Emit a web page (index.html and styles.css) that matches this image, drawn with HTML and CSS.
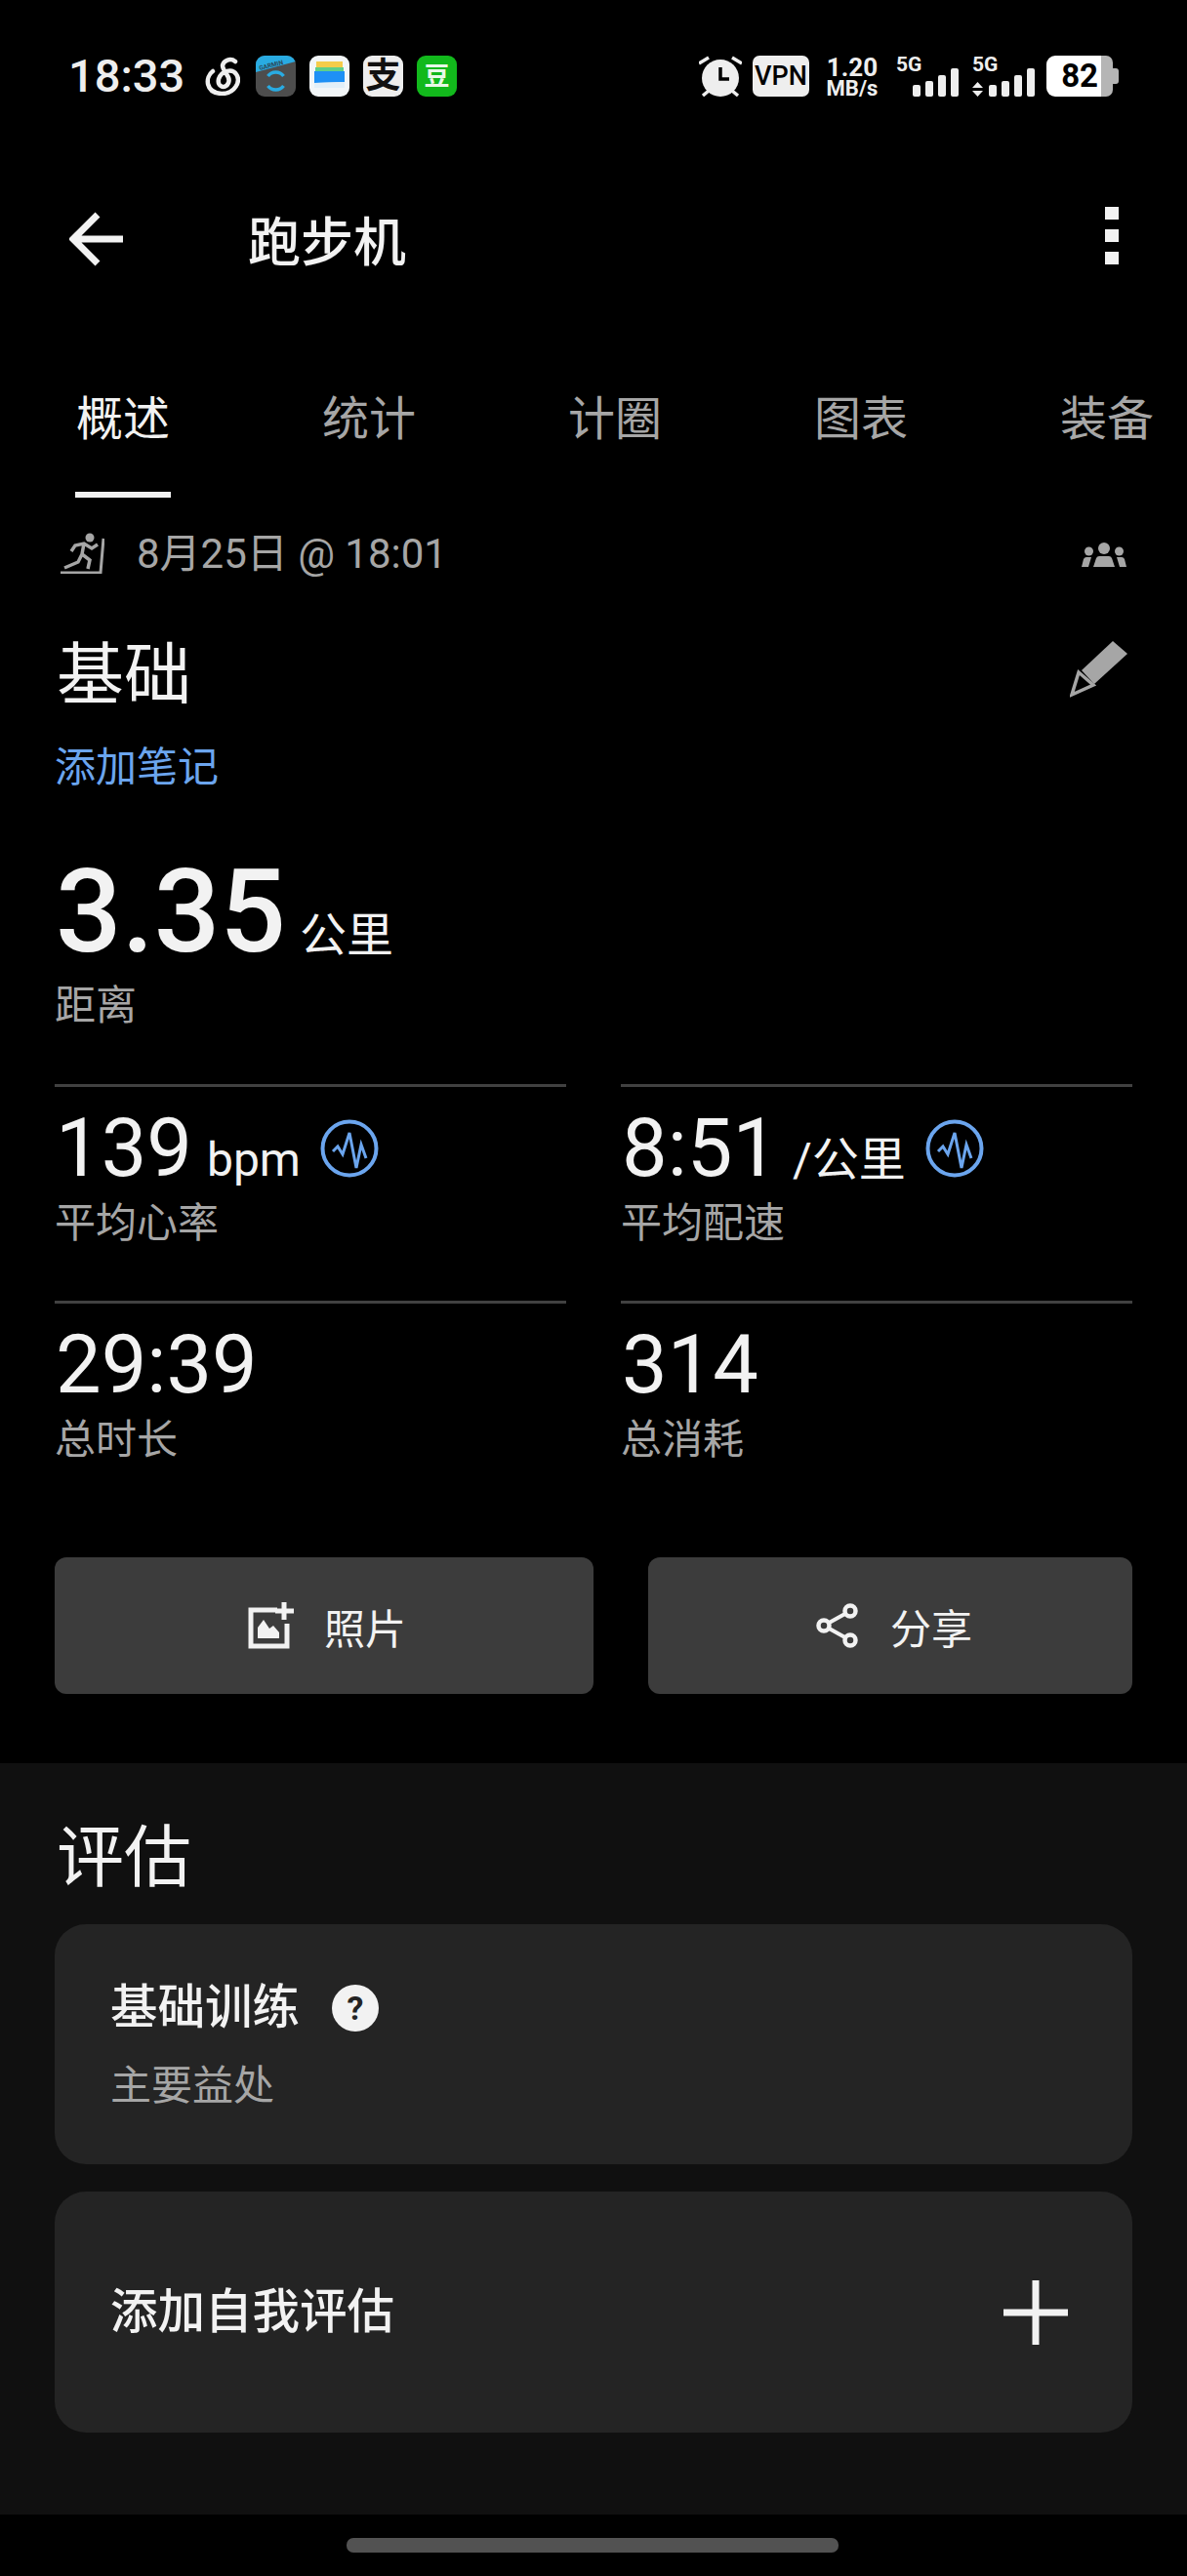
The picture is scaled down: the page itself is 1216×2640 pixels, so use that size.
FILE: index.html
```html
<!DOCTYPE html>
<html lang="zh-CN">
<head>
    <meta charset="UTF-8">
    <meta name="viewport" content="width=device-width, initial-scale=1.0">
    <title>跑步机</title>
    <link rel="stylesheet" href="styles.css">
</head>
<body>
<div class="status-bar">
    <span class="clock">18:33</span>
    <div class="app-icons">
        <svg class="app-net" viewBox="0 0 37 40"><path d="M9 15C1 21 1 37 18 38C32 38 38 25 33 18C29 12 18 14 15 23C13 31 22 34 25 27C28 20 19 16 19 9C20 4 27 1 32 5" fill="none" stroke="#eee" stroke-width="4.500" stroke-linecap="round"/></svg>
        <div class="app-tile tile-garmin">
            <svg viewBox="0 0 41 42"><path d="M0 17 41 6V0H0z" fill="#29abe2"/><text x="4" y="15" font-size="6.500" font-weight="700" fill="#2a4a5a" transform="rotate(-14 4 15)">GARMIN</text><path d="M28.500 21a10 10 0 0 0-16 0M12.500 31a10 10 0 0 0 16 0" fill="none" stroke="#29abe2" stroke-width="3.500"/></svg>
        </div>
        <div class="app-tile tile-wallet">
            <svg viewBox="0 0 41 42"><rect x="7" y="6" width="27" height="7" fill="#f5cc4a"/><rect x="6" y="12" width="29" height="5" fill="#5fcf8a"/><path d="M5 16h31v11L5 28z" fill="#1e90f5"/><path d="M5 28l31-1v6H5z" fill="#e2eff8"/></svg>
        </div>
        <div class="app-tile tile-alipay">支</div>
        <div class="app-tile tile-douban">豆</div>
    </div>
    <div class="status-right">
        <svg class="alarm" viewBox="0 0 44 42"><path d="M0 8l10-6M44 8 34 2M10 36l-6 5M34 36l6 5" stroke="#eee" stroke-width="3.500"/><circle cx="22" cy="23" r="19" fill="#eee"/><path d="M22 12v12h9" fill="none" stroke="#000" stroke-width="3.500"/></svg>
        <span class="vpn">VPN</span>
        <div class="speed"><span class="speed-num">1.20</span><span class="speed-unit">MB/s</span></div>
        <div class="signal">
            <span class="signal-label">5G</span>
            <div class="bars">
                <i class="bar bar-1"></i><i class="bar bar-2"></i><i class="bar bar-3"></i><i class="bar bar-4"></i>
            </div>
        </div>
        <div class="signal signal-data">
            <span class="signal-label">5G</span>
            <div class="bars">
                <svg class="arrows" viewBox="0 0 11 15"><path d="M5.500 0l5.500 6H0zM5.500 15 11 9H0z" fill="#eee"/></svg>
                <i class="bar bar-1"></i><i class="bar bar-2"></i><i class="bar bar-3"></i><i class="bar bar-4"></i>
            </div>
        </div>
        <div class="battery"><span class="battery-fill">82</span><span class="battery-empty"></span><span class="battery-tip"></span></div>
    </div>
</div>

<div class="toolbar">
    <svg class="back" viewBox="0 0 56 56"><path d="M55 28H5M29 3 4 28l25 25" fill="none" stroke="#f2f2f2" stroke-width="7"/></svg>
    <h1 class="title">跑步机</h1>
    <div class="kebab"><i></i><i></i><i></i></div>
</div>

<div class="tabs">
    <div class="tab tab-active">概述</div>
    <div class="tab">统计</div>
    <div class="tab">计圈</div>
    <div class="tab">图表</div>
    <div class="tab">装备</div>
</div>

<div class="overview">
    <div class="meta">
        <svg class="run-icon" viewBox="0 0 46 42"><circle cx="31" cy="5" r="4.500" fill="#a6a6a6"/><path d="M39 12l-6 4-8-5-9 2-4 6M25 11l-2 11 8 6-2 9M23 22l-4 8-14 6" fill="none" stroke="#a6a6a6" stroke-width="3.500"/><path d="M45 6l-3 35H1" fill="none" stroke="#a6a6a6" stroke-width="3"/></svg>
        <span class="meta-date">8月25日 @ 18:01</span>
        <svg class="group-icon" viewBox="0 0 46 26"><circle cx="23" cy="6" r="6" fill="#a6a6a6"/><circle cx="7.500" cy="9" r="4.500" fill="#a6a6a6"/><circle cx="38.500" cy="9" r="4.500" fill="#a6a6a6"/><path d="M12 25l3-9q1-2 3-2h10q2 0 3 2l3 9zM0 25l2-8q1-2 3-2h5l-3 10zM46 25l-2-8q-1-2-3-2h-5l3 10z" fill="#a6a6a6"/></svg>
    </div>
    <div class="heading-row">
        <h2 class="workout-name">基础</h2>
        <svg class="pencil" viewBox="0 0 60 60"><path d="M44 1l15 13-34 31-13-14z" fill="#a6a6a6"/><path d="M9 33l15 13L2 56z" fill="none" stroke="#a6a6a6" stroke-width="3.500"/></svg>
    </div>
    <div class="add-note">添加笔记</div>

    <div class="distance">3.35<span class="distance-unit">公里</span></div>
    <div class="stat-label">距离</div>

    <div class="stats">
        <div class="stat">
            <div class="stat-value">139<span class="stat-unit">bpm</span>
                <svg class="pulse" viewBox="0 0 60 60"><circle cx="30" cy="30" r="27.500" fill="none" stroke="#6ba5ee" stroke-width="4"/><path d="M13 33l5-5 5 8 7-22 7 36 5-24 5 14" fill="none" stroke="#6ba5ee" stroke-width="3"/></svg>
            </div>
            <div class="stat-label">平均心率</div>
        </div>
        <div class="stat">
            <div class="stat-value">8:51<span class="stat-unit">/公里</span>
                <svg class="pulse" viewBox="0 0 60 60"><circle cx="30" cy="30" r="27.500" fill="none" stroke="#6ba5ee" stroke-width="4"/><path d="M13 33l5-5 5 8 7-22 7 36 5-24 5 14" fill="none" stroke="#6ba5ee" stroke-width="3"/></svg>
            </div>
            <div class="stat-label">平均配速</div>
        </div>
        <div class="stat">
            <div class="stat-value">29:39</div>
            <div class="stat-label">总时长</div>
        </div>
        <div class="stat">
            <div class="stat-value">314</div>
            <div class="stat-label">总消耗</div>
        </div>
    </div>

    <div class="actions">
        <div class="action action-photo">
            <svg class="action-icon" viewBox="0 0 48 48"><path d="M30 8H3v37h37V22" fill="none" stroke="#f2f2f2" stroke-width="5"/><path d="M37 0v18M28 9h19" stroke="#f2f2f2" stroke-width="5"/><path d="M10 37V26l6-8 6 9 4-3 6 7v6z" fill="#f2f2f2"/></svg>
            <span>照片</span>
        </div>
        <div class="action action-share">
            <svg class="action-icon" viewBox="0 0 48 48"><path d="M37 9 10 24l27 15" fill="none" stroke="#f2f2f2" stroke-width="4"/><circle cx="37" cy="9" r="5.500" fill="#3c3c3c" stroke="#f2f2f2" stroke-width="4.500"/><circle cx="10" cy="24" r="5.500" fill="#3c3c3c" stroke="#f2f2f2" stroke-width="4.500"/><circle cx="37" cy="39" r="5.500" fill="#3c3c3c" stroke="#f2f2f2" stroke-width="4.500"/></svg>
            <span>分享</span>
        </div>
    </div>
</div>

<div class="assessment">
    <h2 class="assess-title">评估</h2>
    <div class="card card-training">
        <div class="card-title">基础训练<span class="help">?</span></div>
        <div class="card-sub">主要益处</div>
    </div>
    <div class="card card-add">
        <div class="card-title">添加自我评估</div>
        <svg class="plus" viewBox="0 0 66 66"><path d="M33 0v66M0 33h66" stroke="#f2f2f2" stroke-width="7"/></svg>
    </div>
</div>

<div class="nav-bar"><div class="home-pill"></div></div>
</body>
</html>
```

FILE: styles.css
```css
* {
    box-sizing: border-box;
}
body {
    margin: 0;
    width: 1216px;
    height: 2640px;
    background-color: #000;
    color: #f2f2f2;
    font-family: Roboto, "Noto Sans CJK SC", sans-serif;
    overflow: hidden;
}
h1, h2 {
    margin: 0;
    font-weight: 400;
}

/* status bar */
.status-bar {
    height: 156px;
    padding: 57px 70px 0 70px;
    display: flex;
    align-items: flex-start;
}
.clock {
    width: 138px;
    font-size: 47px;
    line-height: 42px;
    font-weight: 500;
    color: #eee;
}
.app-icons {
    display: flex;
    align-items: center;
    gap: 14px;
    margin-left: 1px;
}
.app-net {
    width: 37px;
    height: 40px;
    margin-right: 2px;
}
.app-tile {
    width: 41px;
    height: 42px;
    border-radius: 9px;
    overflow: hidden;
    display: flex;
    align-items: center;
    justify-content: center;
}
.app-tile svg {
    width: 41px;
    height: 42px;
    display: block;
}
.tile-garmin {
    background-color: #4d4d4d;
}
.tile-wallet {
    background-color: #f2f6f8;
}
.tile-alipay {
    background-color: #eee;
    color: #111;
    font-size: 36px;
    line-height: 42px;
    font-weight: 700;
}
.tile-douban {
    background-color: #12b91c;
    color: #e8f8e8;
    font-size: 26px;
    line-height: 42px;
    font-weight: 700;
}
.status-right {
    margin-left: auto;
    display: flex;
    align-items: flex-start;
}
.alarm {
    width: 44px;
    height: 42px;
}
.vpn {
    width: 58px;
    height: 42px;
    margin-left: 11px;
    border-radius: 7px;
    background-color: #eee;
    color: #000;
    font-size: 27px;
    font-weight: 500;
    line-height: 42px;
    text-align: center;
}
.speed {
    width: 56px;
    margin-left: 16px;
    display: flex;
    flex-direction: column;
    align-items: center;
    font-weight: 700;
    color: #eee;
}
.speed-num {
    font-size: 26px;
    line-height: 24px;
}
.speed-unit {
    font-size: 22px;
    line-height: 20px;
}
.signal {
    position: relative;
    width: 64px;
    height: 42px;
    margin-left: 17px;
}
.signal-data {
    margin-left: 14px;
}
.signal-label {
    position: absolute;
    top: -2px;
    left: 0;
    font-size: 21px;
    line-height: 22px;
    font-weight: 700;
    color: #eee;
}
.bars {
    height: 42px;
    display: flex;
    align-items: flex-end;
    justify-content: flex-end;
    gap: 5px;
}
.arrows {
    width: 11px;
    height: 15px;
    margin-right: 1px;
}
.bar {
    width: 8px;
    border-radius: 2px;
    background-color: #eee;
}
.bar-1 {
    height: 12px;
}
.bar-2 {
    height: 16px;
}
.bar-3 {
    height: 22px;
}
.bar-4 {
    height: 29px;
}
.battery {
    display: flex;
    align-items: center;
    height: 42px;
    margin-left: 12px;
}
.battery-fill {
    width: 56px;
    height: 42px;
    padding-right: 3px;
    border-radius: 9px 0 0 9px;
    background-color: #fff;
    color: #000;
    font-size: 33px;
    font-weight: 700;
    line-height: 42px;
    text-align: right;
}
.battery-empty {
    width: 12px;
    height: 42px;
    border-radius: 0 7px 7px 0;
    background-color: #b5b5b5;
}
.battery-tip {
    width: 6px;
    height: 16px;
    border-radius: 0 3px 3px 0;
    background-color: #b5b5b5;
}

/* toolbar */
.toolbar {
    height: 178px;
    padding: 62px 70px 0 71px;
    display: flex;
    align-items: flex-start;
}
.back {
    width: 56px;
    height: 56px;
    margin-top: -1px;
}
.title {
    margin-left: 127px;
    margin-top: 5px;
    font-size: 54px;
    line-height: 54px;
    font-weight: 500;
    color: #f2f2f2;
}
.kebab {
    margin-left: auto;
    margin-top: -6px;
    display: flex;
    flex-direction: column;
    gap: 10px;
}
.kebab i {
    display: block;
    width: 14px;
    height: 13px;
    background-color: #f2f2f2;
}

/* tabs */
.tabs {
    height: 176px;
    padding-left: 77px;
    display: flex;
}
.tab {
    flex: 0 0 252px;
    padding-top: 72px;
    padding-left: 1px;
    font-size: 48px;
    line-height: 48px;
    color: #a6a6a6;
}
.tab:last-child {
    flex: 0 0 auto;
}
.tab-active {
    position: relative;
    color: #f2f2f2;
}
.tab-active::after {
    content: "";
    position: absolute;
    left: 0;
    bottom: 0;
    width: 98px;
    height: 6px;
    background-color: #f2f2f2;
}

/* overview */
.overview {
    height: 1297px;
    padding: 0 56px;
}
.meta {
    height: 78px;
    padding-top: 35px;
    display: flex;
    align-items: flex-start;
}
.run-icon {
    width: 46px;
    height: 42px;
    margin-left: 5px;
    margin-top: 1px;
}
.meta-date {
    margin-left: 33px;
    font-size: 42px;
    line-height: 46px;
    color: #a6a6a6;
}
.group-icon {
    margin-left: auto;
    margin-right: 6px;
    margin-top: 11px;
    width: 46px;
    height: 26px;
}
.heading-row {
    height: 140px;
    padding-top: 69px;
    padding-left: 2px;
    display: flex;
    justify-content: space-between;
    align-items: flex-start;
}
.workout-name {
    font-size: 69px;
    line-height: 71px;
}
.pencil {
    width: 60px;
    height: 60px;
    margin-top: -1px;
    margin-right: 4px;
}
.add-note {
    margin-top: 37px;
    font-size: 42px;
    line-height: 44px;
    color: #6ba5ee;
}
.distance {
    margin-top: 67px;
    margin-bottom: 15px;
    padding-left: 1px;
    font-size: 119px;
    line-height: 118px;
    font-weight: 500;
}
.distance-unit {
    margin-left: 14px;
    font-size: 48px;
    line-height: 1;
    font-weight: 400;
}
.stat-label {
    font-size: 42px;
    line-height: 44px;
    color: #a6a6a6;
}
.stats {
    margin-top: 58px;
    display: grid;
    grid-template-columns: 524px 524px;
    column-gap: 56px;
}
.stat {
    height: 222px;
    border-top: 3px solid #414141;
    padding-top: 21px;
}
.stat-value {
    height: 97px;
    display: flex;
    align-items: baseline;
    padding-left: 1px;
    font-size: 83px;
    line-height: 84px;
}
.stat-unit {
    margin-left: 15px;
    font-size: 48px;
}
.pulse {
    width: 60px;
    height: 60px;
    margin-left: 20px;
    margin-bottom: 14px;
    align-self: center;
}
.actions {
    margin-top: 41px;
    display: flex;
    gap: 56px;
}
.action {
    height: 140px;
    padding-left: 6px;
    border-radius: 12px;
    background-color: #3c3c3c;
    display: flex;
    align-items: center;
    justify-content: center;
    gap: 30px;
    font-size: 42px;
}
.action-photo {
    width: 552px;
}
.action-share {
    width: 496px;
}
.action-icon {
    width: 48px;
    height: 48px;
}

/* assessment */
.assessment {
    height: 770px;
    padding: 0 56px;
    background-color: #101010;
}
.assess-title {
    padding-top: 62px;
    padding-left: 2px;
    font-size: 69px;
    line-height: 72px;
}
.card {
    height: 246px;
    border-radius: 32px;
    background-color: #242424;
    padding: 0 57px;
}
.card-training {
    margin-top: 31px;
    padding-top: 58px;
}
.card-add {
    height: 247px;
    margin-top: 28px;
    display: flex;
    align-items: center;
    justify-content: space-between;
}
.card-title {
    display: flex;
    align-items: center;
    font-size: 48.500px;
    line-height: 56px;
    font-weight: 500;
}
.help {
    width: 48px;
    height: 48px;
    margin-left: 33px;
    border-radius: 50%;
    background-color: #f2f2f2;
    color: #242424;
    font-size: 34px;
    font-weight: 700;
    line-height: 48px;
    text-align: center;
}
.card-sub {
    margin-top: 30px;
    font-size: 42px;
    line-height: 44px;
    color: #a6a6a6;
}
.plus {
    width: 66px;
    height: 66px;
    margin-right: 9px;
}

/* nav bar */
.nav-bar {
    height: 63px;
    padding-top: 24px;
}
.home-pill {
    width: 504px;
    height: 15px;
    margin-left: 355px;
    border-radius: 7px;
    background-color: #525252;
}
```
